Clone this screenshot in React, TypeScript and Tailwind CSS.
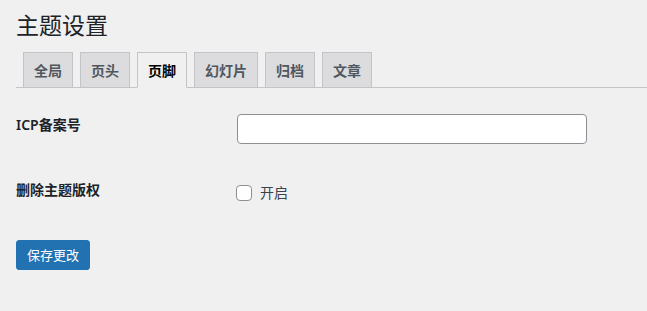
const tabs = ["全局", "页头", "页脚", "幻灯片", "归档", "文章"];

export default function App() {
  const active = "页脚";
  return (
    <div className="min-h-screen bg-[#f0f0f1] pl-4 text-[#1d2327] font-['Noto_Sans','Noto_Sans_CJK_SC',sans-serif]">
      <h1 className="pt-[10px] h-[40px] text-[23px] leading-[30px] font-normal">主题设置</h1>

      <nav className="mt-3 flex items-end border-b border-[#c3c4c7]">
        {tabs.map((t) => (
          <a
            key={t}
            className={
              t === active
                ? "ml-[7px] -mb-px h-9 px-[10px] flex items-center border border-[#c3c4c7] border-b-[#f0f0f1] bg-[#f0f0f1] text-[14px] font-semibold text-black"
                : "ml-[7px] -mb-px h-9 px-[10px] flex items-center border border-[#c3c4c7] bg-[#dcdcde] text-[14px] font-semibold text-[#50575e]"
            }
          >
            {t}
          </a>
        ))}
      </nav>

      <div className="mt-[26px] flex items-start">
        <label className="w-[221px] pt-[2px] text-[14px] leading-[18px] font-semibold">ICP备案号</label>
        <input
          type="text"
          className="w-[350px] h-[30px] rounded-[4px] border border-[#8c8f94] bg-white px-2 text-[14px] outline-none"
        />
      </div>

      <div className="mt-[37px] flex items-start">
        <label className="w-[220px] text-[14px] leading-[18px] font-semibold">删除主题版权</label>
        <div className="pt-[3px] flex items-center gap-2">
          <span className="w-4 h-4 rounded-[4px] border border-[#8c8f94] bg-white" />
          <span className="text-[14px] leading-[18px] text-[#3c434a]">开启</span>
        </div>
      </div>

      <button className="mt-[38px] h-[30px] px-[10px] rounded-[3px] border border-[#2271b1] bg-[#2271b1] text-[13px] text-white leading-[28px]">
        保存更改
      </button>
    </div>
  );
}
